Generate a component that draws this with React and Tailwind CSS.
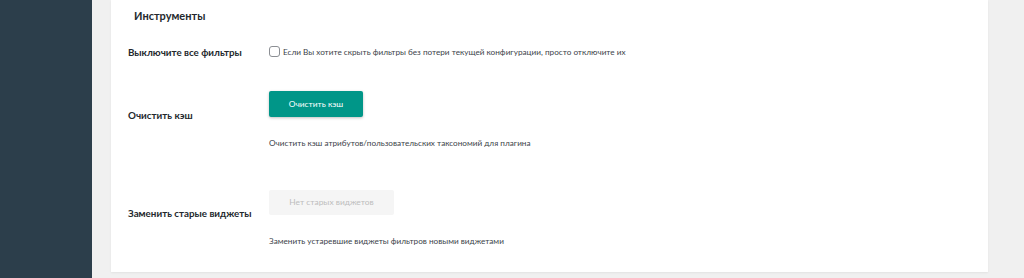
import React from 'react';

export default function App() {
  return (
    <div className="flex h-[278px] w-full overflow-hidden" style={{ fontFamily: 'Lato, "Noto Sans", sans-serif' }}>
      <div className="w-[92px] shrink-0 bg-[#2c3e4b]" />
      <div className="flex-1 bg-[#f0f0f0] pl-[19px] pr-[36px]">
        <div className="h-[272px] bg-white shadow-[0_1px_2px_rgba(0,0,0,0.06)]">
          <h2 className="pl-[23px] pt-[8px] text-[11px] font-bold leading-[16px] text-[#23282d]">Инструменты</h2>

          <div className="mt-[16px] flex h-[24px] items-center pl-[17px]">
            <div className="w-[141px] whitespace-nowrap text-[9.8px] font-bold text-[#23282d]">Выключите все фильтры</div>
            <label className="flex items-center gap-[3px] whitespace-nowrap text-[8.2px] text-[#3c434a]">
              <span className="h-[11px] w-[11px] rounded-[3px] border border-[#8c8f94] bg-white" />
              Если Вы хотите скрыть фильтры без потери текущей конфигурации, просто отключите их
            </label>
          </div>

          <div className="mt-[16px] flex h-[70px] items-center pl-[17px]">
            <div className="w-[141px] whitespace-nowrap text-[9.8px] font-bold text-[#23282d]">Очистить кэш</div>
            <div className="flex h-full flex-col pt-[11px]">
              <button className="h-[26px] w-[94px] rounded-[2px] bg-[#009688] text-[8.4px] text-white shadow-[0_1px_3px_rgba(0,0,0,0.25)]">
                Очистить кэш
              </button>
              <p className="mt-[19px] whitespace-nowrap text-[8.2px] leading-[14px] text-[#3c434a]">
                Очистить кэш атрибутов/пользовательских таксономий для плагина
              </p>
            </div>
          </div>

          <div className="mt-[28px] flex h-[70px] items-center pl-[17px]">
            <div className="w-[141px] whitespace-nowrap text-[9.8px] font-bold text-[#23282d]">Заменить старые виджеты</div>
            <div className="flex h-full flex-col pt-[12px]">
              <button disabled className="h-[26px] w-[125px] rounded-[2px] bg-[#f5f5f5] text-[8.4px] text-[#bdbdbd]">
                Нет старых виджетов
              </button>
              <p className="mt-[19px] whitespace-nowrap text-[8.2px] leading-[14px] text-[#3c434a]">
                Заменить устаревшие виджеты фильтров новыми виджетами
              </p>
            </div>
          </div>
        </div>
      </div>
    </div>
  );
}
